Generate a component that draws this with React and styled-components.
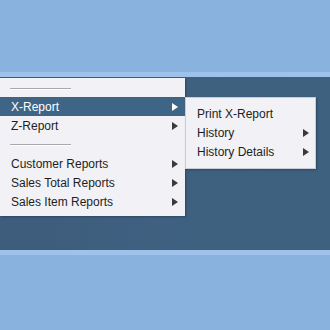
import React from "react";
import styled, { createGlobalStyle } from "styled-components";

const Global = createGlobalStyle`
  html, body { margin: 0; padding: 0; }
  body { font-family: "Liberation Sans", Arial, sans-serif; }
`;

const Screen = styled.div`
  width: 330px;
  height: 330px;
  display: flex;
  flex-direction: column;
  background: #8ab2df;
  overflow: hidden;
`;

const Sky = styled.div`
  height: 72px;
  flex: none;
`;

const Stripe = styled.div`
  height: 5px;
  flex: none;
  background: #9fc2ea;
`;

const Band = styled.div`
  height: 173px;
  flex: none;
  background: linear-gradient(90deg, #3e5c7c 0%, #3f6080 50%, #3d617f 100%);
  display: flex;
  align-items: flex-start;
  padding-top: 1px;
  box-sizing: border-box;
`;

const Menu = styled.div`
  width: ${(p) => p.$width}px;
  margin-top: ${(p) => p.$top || 0}px;
  background: #f1f1f6;
  padding: ${(p) => p.$pad};
  box-sizing: border-box;
  box-shadow: 1px 1px 2px rgba(0, 0, 0, 0.25);
  border: ${(p) => (p.$border ? "1px solid #c9ccd6" : "none")};
`;

const Row = styled.div`
  height: 19px;
  display: flex;
  align-items: center;
  justify-content: space-between;
  padding: 0 ${(p) => p.$right}px 0 ${(p) => p.$left}px;
  font-size: 12px;
  color: ${(p) => (p.$active ? "#ffffff" : "#1e1e1e")};
  background: ${(p) => (p.$active ? "#3f6586" : "transparent")};
`;

const Sep = styled.div`
  height: ${(p) => p.$h}px;
  display: flex;
  align-items: center;
  padding-left: 10px;
  &::before {
    content: "";
    width: 61px;
    height: 1px;
    background: #a9a9ae;
    box-shadow: 0 1px 0 #ffffff;
  }
`;

const Arrow = styled.span`
  width: 0;
  height: 0;
  border-top: 4px solid transparent;
  border-bottom: 4px solid transparent;
  border-left: 6px solid ${(p) => (p.$active ? "#ffffff" : "#3a3a3a")};
`;

const Item = ({ label, sub, active, left = 11, right = 7 }) => (
  <Row $active={active} $left={left} $right={right}>
    <span>{label}</span>
    {sub && <Arrow $active={active} />}
  </Row>
);

export default function App() {
  return (
    <>
      <Global />
      <Screen>
        <Sky />
        <Stripe />
        <Band>
          <Menu $width={185} $pad="2px 0 5px">
            <Sep $h={17} />
            <Item label="X-Report" sub active />
            <Item label="Z-Report" sub />
            <Sep $h={19} />
            <Item label="Customer Reports" sub />
            <Item label="Sales Total Reports" sub />
            <Item label="Sales Item Reports" sub />
          </Menu>
          <Menu $width={131} $top={19} $pad="6px 0 7px" $border>
            <Item label="Print X-Report" left={11} />
            <Item label="History" sub left={11} right={6} />
            <Item label="History Details" sub left={11} right={6} />
          </Menu>
        </Band>
        <Stripe />
      </Screen>
    </>
  );
}
